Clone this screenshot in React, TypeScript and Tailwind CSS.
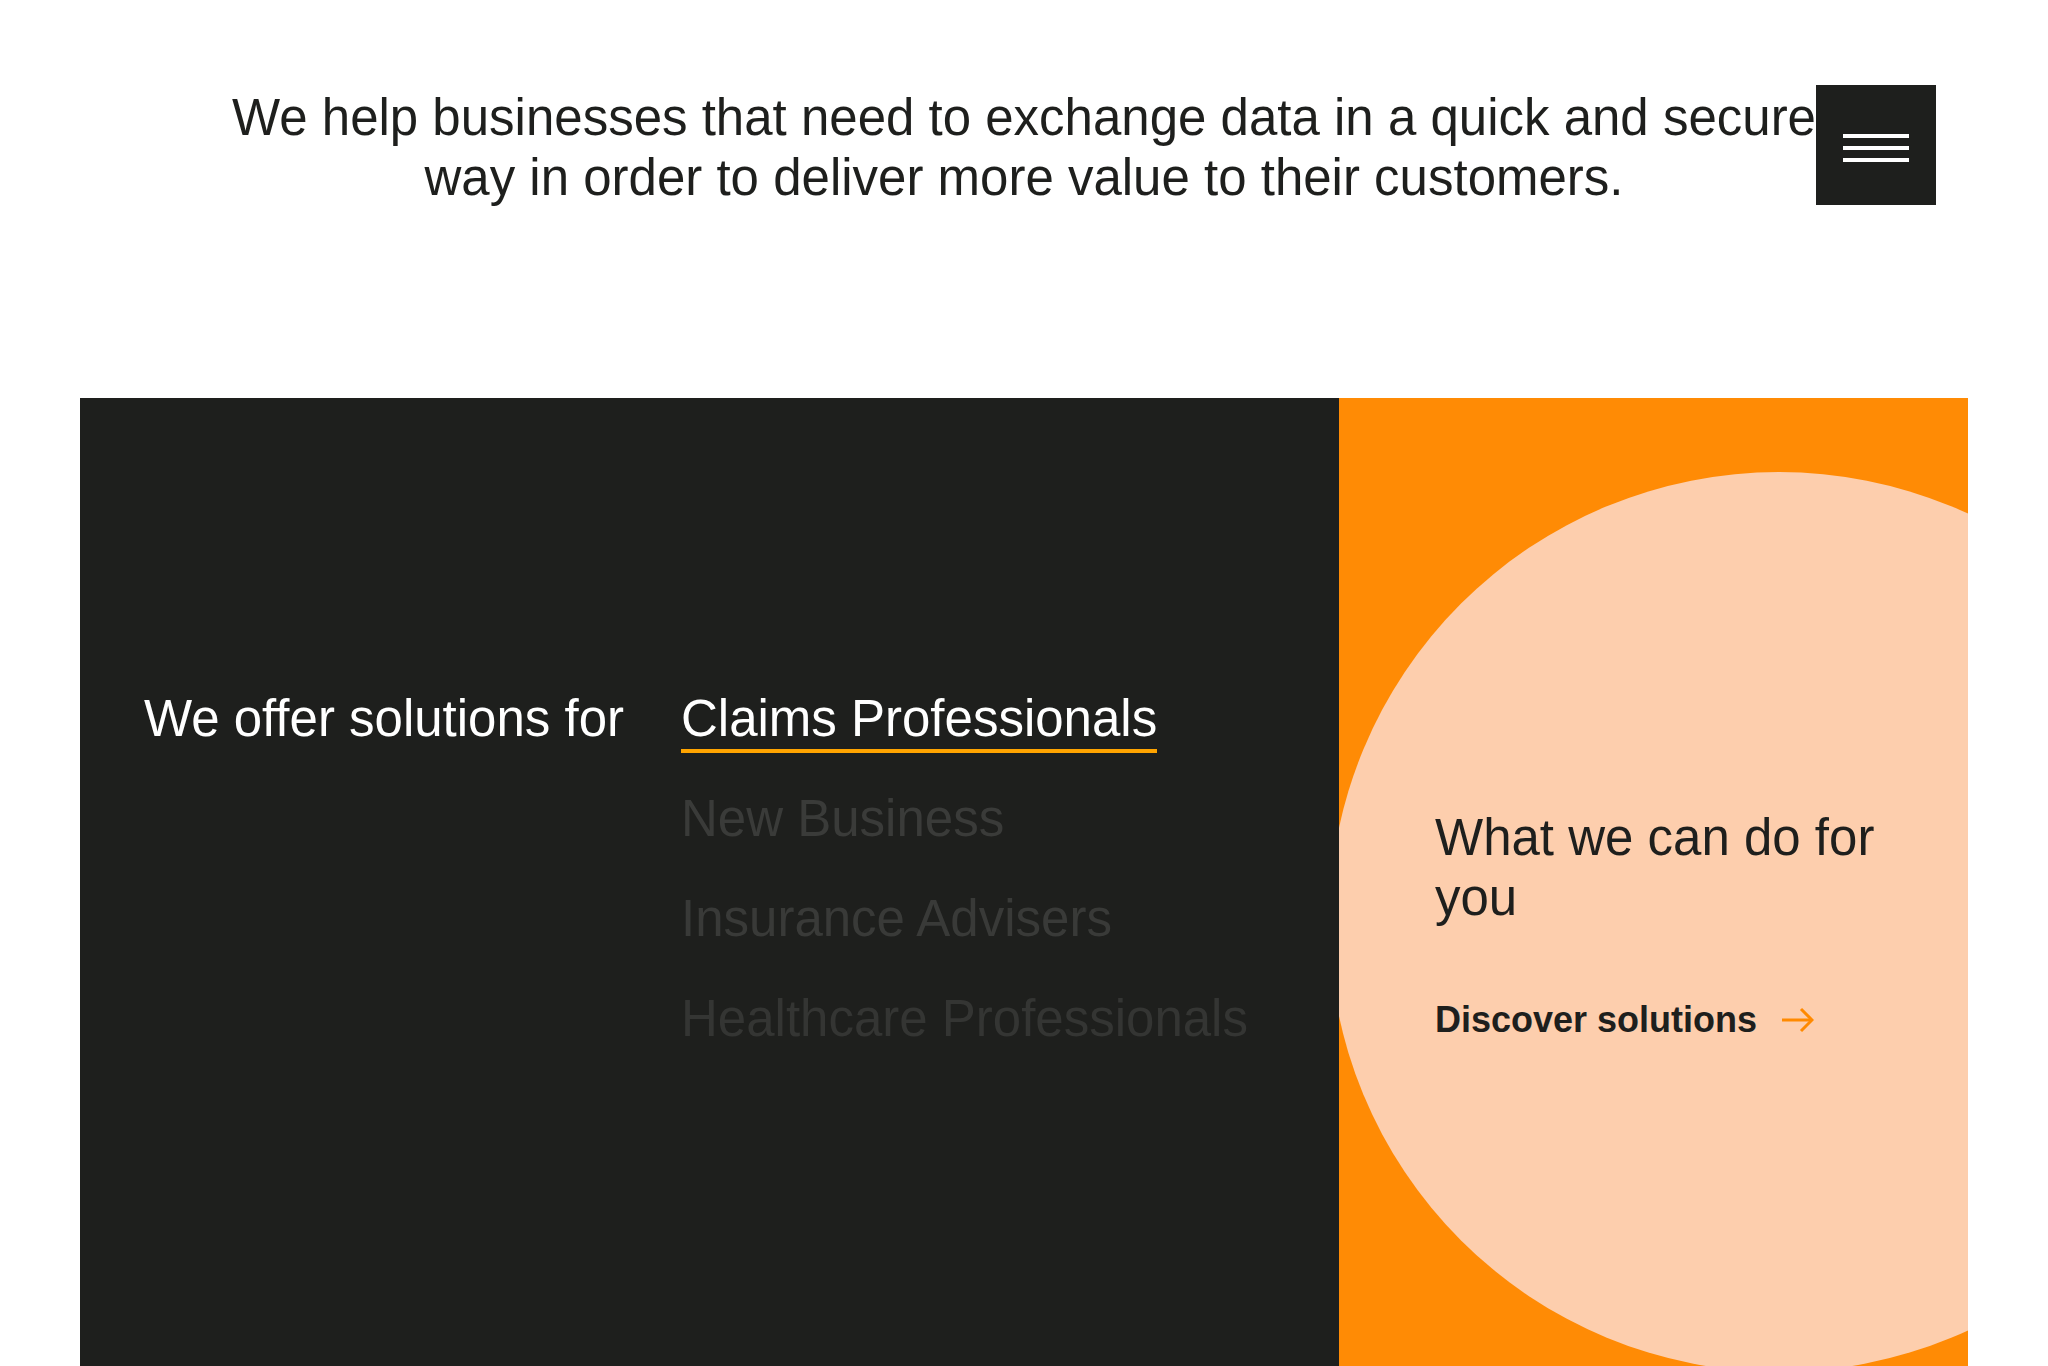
import React from "react";

export default function App() {
  const items = [
    { label: "New Business", color: "text-[#3a3b39]" },
    { label: "Insurance Advisers", color: "text-[#393a38]" },
    { label: "Healthcare Professionals", color: "text-[#343533]" },
  ];
  return (
    <div className="relative min-h-screen overflow-hidden bg-white font-['Liberation_Sans',Arial,sans-serif] text-[#1e1f1d]">
      <header className="flex justify-center pt-[88px]">
        <p className="w-[1640px] text-center text-[51px] leading-[60px] text-[#1e1f1d]">
          We help businesses that need to exchange data in a quick and secure way in order to deliver more value to their
          customers.
        </p>
      </header>

      <button
        aria-label="Menu"
        className="absolute left-[1816px] top-[85px] flex h-[120px] w-[120px] flex-col items-center justify-center gap-[8px] bg-[#1e1f1d] pt-[6px]"
      >
        <span className="block h-[4px] w-[66px] bg-white" />
        <span className="block h-[4px] w-[66px] bg-white" />
        <span className="block h-[4px] w-[66px] bg-white" />
      </button>

      <section className="mx-[80px] mt-[190px] flex h-[968px]">
        <div className="flex flex-1 bg-[#1e1f1d] pl-[64px] pt-[291px]">
          <div className="w-[537px] text-[51px] leading-[60px] text-white">We offer solutions for</div>
          <ul className="flex flex-col">
            <li className="h-[100px]">
              <span className="inline-block border-b-4 border-[#ffa400] text-[51px] leading-[60px] text-white">
                Claims Professionals
              </span>
            </li>
            {items.map((it) => (
              <li key={it.label} className={`h-[100px] w-[588px] text-[51px] leading-[60px] ${it.color}`}>
                {it.label}
              </li>
            ))}
          </ul>
        </div>

        <div className="relative w-[629px] overflow-hidden bg-[#ff8b05]">
          <div className="absolute left-[-10px] top-[74px] h-[900px] w-[900px] rounded-full bg-[#fdcead]" />
          <div className="relative pl-[96px] pt-[410px]">
            <h2 className="w-[480px] text-[51px] font-normal leading-[60px] text-[#1e1f1d]">What we can do for you</h2>
            <a href="#" className="mt-[72px] flex items-center gap-[25px] text-[36px] font-bold leading-[40px] text-[#1e1f1d]">
              <span>Discover solutions</span>
              <svg width="32" height="26" viewBox="0 0 32 26" fill="none" stroke="#ff8a00" strokeWidth="3">
                <path d="M0 13 H30" />
                <path d="M19 2 L30 13 L19 24" />
              </svg>
            </a>
          </div>
        </div>
      </section>
    </div>
  );
}
